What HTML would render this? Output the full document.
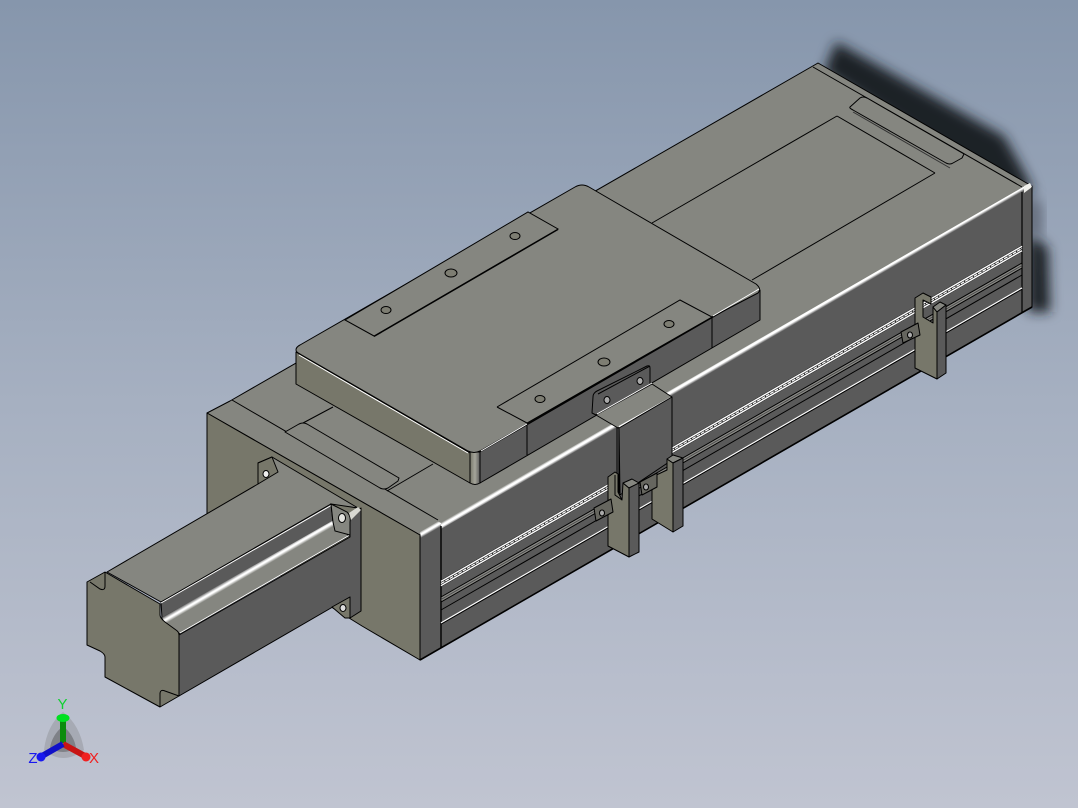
<!DOCTYPE html>
<html><head><meta charset="utf-8"><style>
html,body{margin:0;padding:0;background:#a5afc0;width:1078px;height:808px;overflow:hidden}
svg{display:block}
.l{fill:none;stroke:#000;stroke-width:1}
.t{fill:#858680;stroke:#000;stroke-width:1;stroke-linejoin:round}
.f{fill:#77776a;stroke:#000;stroke-width:1;stroke-linejoin:round}
.d{fill:#5a5a5a;stroke:#000;stroke-width:1;stroke-linejoin:round}
.w{fill:none;stroke:#fff;stroke-width:1}
.h{fill:#7d7d72;stroke:#000;stroke-width:1}
.tab{fill:#66665f;stroke:#000;stroke-width:1;stroke-linejoin:round}
</style></head><body>
<svg width="1078" height="808" viewBox="0 0 1078 808" xmlns="http://www.w3.org/2000/svg" font-family="Liberation Sans, sans-serif">
<defs>
<linearGradient id="bg" x1="0" y1="0" x2="0" y2="1"><stop offset="0" stop-color="#8696ac"/><stop offset="0.5" stop-color="#a6b0c1"/><stop offset="1" stop-color="#c0c4d1"/></linearGradient>
<filter id="blur" x="-30%" y="-30%" width="160%" height="160%"><feGaussianBlur stdDeviation="6"/></filter>
<filter id="soft" x="-20%" y="-20%" width="140%" height="140%"><feGaussianBlur stdDeviation="0.7"/></filter>
<linearGradient id="corner" x1="0" y1="0" x2="1" y2="0"><stop offset="0" stop-color="#77776a"/><stop offset="0.5" stop-color="#a5a59a"/><stop offset="1" stop-color="#5a5a5a"/></linearGradient>
<linearGradient id="band" gradientUnits="userSpaceOnUse" x1="441" y1="522.5" x2="444.2" y2="528"><stop offset="0" stop-color="#858680"/><stop offset="0.35" stop-color="#ffffff"/><stop offset="0.6" stop-color="#ffffff"/><stop offset="1" stop-color="#5a5a5a"/></linearGradient>
<linearGradient id="band2" gradientUnits="userSpaceOnUse" x1="423" y1="529.5" x2="426.2" y2="535"><stop offset="0" stop-color="#858680"/><stop offset="0.4" stop-color="#ffffff"/><stop offset="0.6" stop-color="#ffffff"/><stop offset="1" stop-color="#5a5a5a"/></linearGradient>
<linearGradient id="mband" gradientUnits="userSpaceOnUse" x1="162" y1="617.5" x2="165.6" y2="623.7"><stop offset="0" stop-color="#5a5a5a"/><stop offset="0.45" stop-color="#ffffff"/><stop offset="0.6" stop-color="#ffffff"/><stop offset="1" stop-color="#858680"/></linearGradient>
</defs>
<rect width="1078" height="808" fill="url(#bg)"/>

<!-- shadow -->
<g filter="url(#blur)" fill="#1f2227">
<polygon points="836,42 1004,136 1022,168 1034,192 1000,190 824,72"/>
<polygon points="1028,232 1048,248 1050,312 1028,312"/>
</g>
<polygon points="1026,190 1042,205 1042,235 1026,238" fill="#646c7a" filter="url(#blur)"/>

<!-- main top face -->
<polygon class="t" points="207,413 230,401 818,63 1030,185 1024,190 441,526 420,535"/>
<!-- front face -->
<polygon class="f" points="207,413 420,535 420,660 362,626 207,530"/>
<!-- side face -->
<polygon class="d" points="441,526 1024,190 1032,186 1032,307 420,660 420,535"/>
<!-- top face lines -->
<polyline class="l" points="232,400 438,520"/>
<polyline class="l" points="813,67 1022,187"/>
<polyline class="l" points="652,223 837,116"/>
<polyline class="l" points="752,280 935,173"/>
<polyline class="l" points="837,116 935,173"/>
<!-- rear rail cover -->
<path class="t" d="M850,107 L860,98 Q863,96 867,98 L964,154 L962,158 L953,163 Q950,165 946,163 L853,110 Q849,108 850,107 Z"/>
<polyline fill="none" stroke="#333" points="853,112 950,168"/>
<!-- front rail cover -->
<path class="t" d="M285,432 L299,424 Q303,422 307,424 L399,478 L398,481 L388,488 Q384,490 380,488 Z"/>
<polyline class="l" points="303,423 333,407"/>
<polyline class="l" points="387,491 433,464"/>

<!-- bright band along top edge -->
<polygon points="441,522.5 1024,186.5 1024,193 441,529" fill="url(#band)"/>
<polygon points="420,532 438,521.5 441,523 441,529 421,538" fill="url(#band2)"/>
<polygon points="1024,186 1030,183 1032,187 1024,193" fill="#f0f0ec"/>
<line x1="441" y1="526" x2="441" y2="648" stroke="#000" stroke-width="1.4"/>
<line x1="1022" y1="192" x2="1022" y2="313" stroke="#000" stroke-width="1.2"/>
<line x1="420" y1="537" x2="420" y2="660" stroke="#000"/>
<line x1="1032" y1="187" x2="1032" y2="307" stroke="#000"/>

<!-- grating -->
<g fill="none">
<polygon points="441,580 1022,245 1022,252 441,587" fill="#1c1c1c"/>
<line x1="441" y1="581.3" x2="1022" y2="246.3" stroke="#fff" stroke-width="1.4"/>
<line x1="441" y1="583.5" x2="1022" y2="248.5" stroke="#fff" stroke-width="1.2" stroke-dasharray="4 1"/>
<line x1="441" y1="585.7" x2="1022" y2="250.7" stroke="#fff" stroke-width="1.4"/>
<polygon points="441,597 1022,263 1022,268 441,602" fill="#8a8a86" stroke="#000"/>
<line x1="441" y1="599.5" x2="1022" y2="265.5" stroke="#444" stroke-width="0.8"/>
<line x1="441" y1="610" x2="1022" y2="275" stroke="#000"/>
<line x1="441" y1="623" x2="1022" y2="288" stroke="#fff" stroke-width="1.3"/>
<line x1="441" y1="624.2" x2="1022" y2="289.2" stroke="#000"/>
</g>
<polyline points="420,660 1032,307" fill="none" stroke="#000" stroke-width="1.6"/>

<!-- carriage plate -->
<polygon class="f" points="296,352 470,453 470,483 296,384"/>
<polygon class="d" points="480,452 760,290 760,320 480,483"/>
<path d="M470,452 L480,452 L480,483 Q475,486 470,483 Z" fill="url(#corner)" stroke="#000"/>
<line class="l" x1="527" y1="425" x2="527" y2="455"/>
<line class="l" x1="712" y1="317" x2="712" y2="348"/>
<path class="t" d="M296,350 Q296,347 300,345 L575,187 Q582,183 589,187 L756,284 Q762,289 758,293 L712,317 L527,424 L480,451 Q474,454 468,451 L300,354 Q296,352 296,350 Z"/>
<polyline points="481,451 527,424" class="w"/>
<polyline points="713,316 759,289" class="w"/>
<polyline points="299,355 468,453" class="w"/>
<polyline points="497,407 680,300 712,317 527,423 497,407" fill="#858680" stroke="#000"/>
<polygon points="345,320 528,212 558,229 374,336" fill="#858680" stroke="#000"/>
<line x1="374" y1="336.5" x2="558" y2="229.5" stroke="#000" stroke-width="1.3"/>
<ellipse class="h" cx="515" cy="236" rx="5" ry="3.5"/>
<ellipse class="h" cx="451" cy="273" rx="6" ry="4"/>
<ellipse class="h" cx="386" cy="310" rx="5" ry="3.5"/>
<ellipse class="h" cx="540" cy="399" rx="5" ry="3.5"/>
<ellipse class="h" cx="604" cy="362" rx="6" ry="4"/>
<ellipse class="h" cx="669" cy="324" rx="5" ry="3.5"/>

<!-- motor -->
<polygon class="t" points="107,572 258,484 258,463 272,457 358,508 331,504 161,602"/>
<polygon class="d" points="161,602 331,504 333,522 162,618"/>
<polygon points="162,619 334,522 349,536 179,634 167,625" fill="#858680" stroke="#000"/>
<polygon points="162,617.5 333,520.5 336.6,526.7 165.6,623.7" fill="url(#mband)"/>
<polyline class="w" points="180,633 349,535.5"/>
<polyline class="w" points="161,603 331,505.5"/>
<polygon class="d" points="179,635 350,537 350,515 361,508 361,611 350,618 350,597 179,696"/>
<!-- front motor face -->
<path class="f" d="M87,582 L105,572 L160,604 L160,615 Q160,618 165,622 L176,630 Q179,632 179,635 L179,696 L160,707 L105,677 L105,657 Q105,654 100,651 L87,645 Z"/>
<path class="l" d="M90,582 L100,589 Q105,591 105,586 L105,572"/>
<path class="l" d="M160,707 L160,694 Q160,689 165,691 L179,696"/>
<!-- lugs -->
<polygon class="f" points="258,463 272,457 278,472 258,484"/>
<ellipse cx="266" cy="474" rx="3" ry="3.5" fill="#eee" stroke="#000"/>
<path d="M331,504 L347,512 Q351,516 350,522 L350,535 L335,531 L333,522 Z" fill="#858680" stroke="#000"/>
<ellipse cx="342" cy="518" rx="3.5" ry="4.5" fill="#e4e4e0" stroke="#000"/>
<polygon points="349,513 358,507 361,510 351,520" fill="#d8d8d2"/>
<polygon class="f" points="332,607 350,597 350,618 345,618"/>
<ellipse cx="343" cy="608" rx="3" ry="3.5" fill="#ddd" stroke="#000"/>

<!-- bracket -->
<path class="d" d="M593,397 Q593,393 597,391 L647,366 Q650,365 650,368 L650,384 L596,415 L592,413 Z"/>
<polyline class="l" points="598,394 650,366"/>
<ellipse cx="607" cy="400" rx="3" ry="3.5" fill="#aaa" stroke="#000"/>
<ellipse cx="640" cy="381" rx="3" ry="3.5" fill="#aaa" stroke="#000"/>
<polygon class="t" points="596,415 652,384 672,397 618,428"/>
<polyline class="w" points="597,414 652,383"/>
<polyline points="619,427 671,398" stroke="#fff" stroke-width="2" fill="none"/>
<polygon class="d" points="619,428 672,397 672,460 620,495"/>
<line x1="617" y1="427" x2="617" y2="490" stroke="#000"/>
<line x1="619" y1="428" x2="619" y2="493" stroke="#000"/>

<!-- clip 2 -->
<polygon class="f" points="652,477 667,470 667,459 673,463 673,532 652,519"/>
<polygon class="t" points="667,459 673,455 683,458 673,463"/>
<polygon class="d" points="673,463 683,458 683,526 673,532"/>
<!-- tab 2 -->
<polygon class="tab" points="640,482 657,473 657,487 642,495"/>
<ellipse cx="646" cy="487" rx="2.5" ry="3" fill="#aaa" stroke="#000"/>
<!-- clip 1 -->
<polygon class="f" points="608,477 615,472 618,474 618,492 622,500 623,483 629,488 629,557 608,546"/>
<polyline class="l" points="615,475 615,495 622,500"/>
<polygon class="t" points="623,483 632,479 639,483 629,488"/>
<polygon class="d" points="629,488 639,483 639,552 629,557"/>
<!-- tab 1 -->
<polygon class="tab" points="594,508 611,499 613,512 596,521"/>
<ellipse cx="602" cy="513" rx="2.5" ry="3" fill="#aaa" stroke="#000"/>

<!-- clip 3 -->
<polygon class="f" points="915,298 923,293 931,297 931,304 923,300 923,317 933,323 933,307 937,312 937,379 915,368"/>
<polygon class="t" points="933,307 940,302 946,305 937,312"/>
<polygon class="d" points="937,312 946,305 946,373 937,379"/>
<polygon class="tab" points="901,332 918,323 920,335 903,343"/>
<ellipse cx="910" cy="335" rx="2.5" ry="3" fill="#aaa" stroke="#000"/>

<!-- triad -->
<path d="M63,712 Q80,725 84,750 Q63,766 44,750 Q47,725 63,712 Z" fill="#777" opacity="0.3"/>
<path d="M63,726 Q74,735 76,748 Q63,756 50,748 Q52,735 63,726 Z" fill="#444" opacity="0.4"/>
<line x1="63" y1="743" x2="63" y2="720" stroke="#0c8c0c" stroke-width="6"/>
<ellipse cx="63" cy="718" rx="6.5" ry="4" fill="#00e020"/>
<line x1="63" y1="744" x2="85" y2="756" stroke="#c81414" stroke-width="6"/>
<circle cx="86" cy="757" r="4.5" fill="#f02020"/>
<line x1="63" y1="744" x2="42" y2="756" stroke="#1010c8" stroke-width="6"/>
<circle cx="41" cy="757" r="4.5" fill="#1818f0"/>
<text x="62.5" y="709" font-size="15" fill="#10d030" text-anchor="middle" font-weight="normal">Y</text>
<text x="94" y="763" font-size="15" fill="#f02020" text-anchor="middle">X</text>
<text x="33" y="763" font-size="15" fill="#1818f0" text-anchor="middle">Z</text>
</svg>
</body></html>
